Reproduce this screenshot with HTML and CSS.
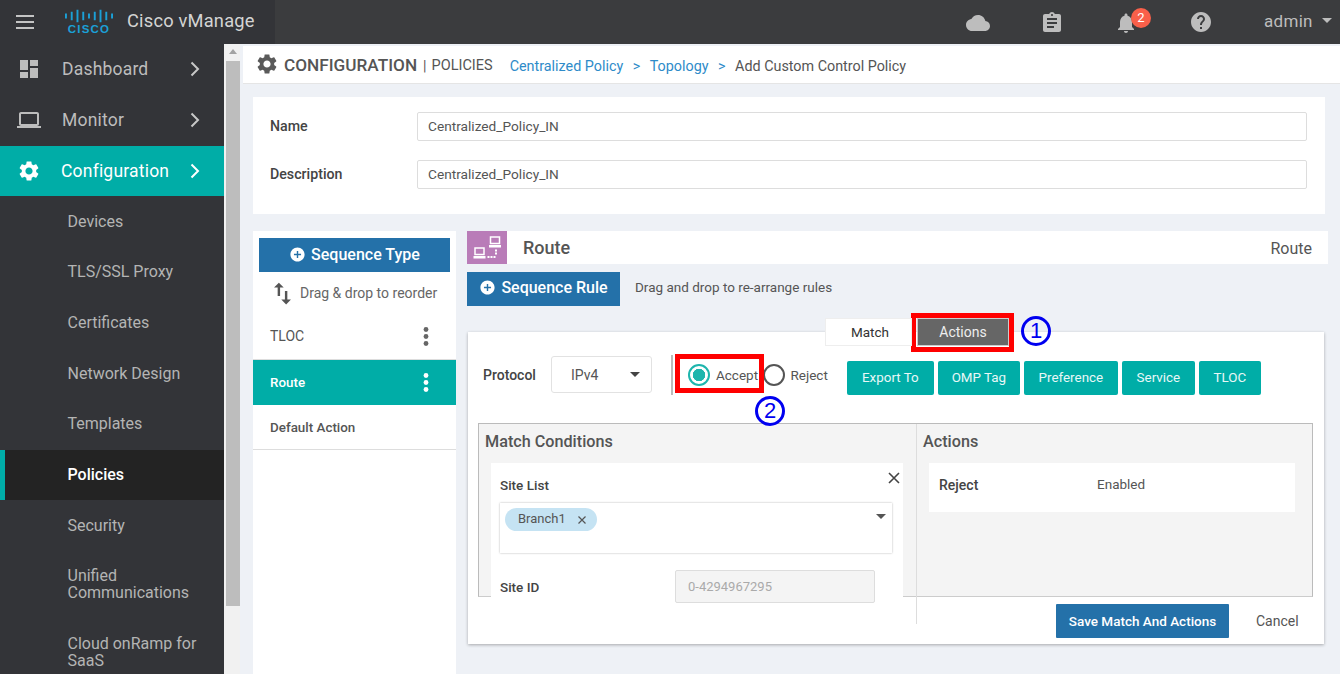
FILE: index.html
```html
<!DOCTYPE html>
<html lang="en">
<head>
<meta charset="utf-8">
<title>Cisco vManage</title>
<link rel="stylesheet" href="styles.css">
</head>
<body>
<header class="topbar">
  <div class="brand">
    <svg class="burger" viewBox="0 0 18 14"><rect y="0" width="18" height="2"/><rect y="6" width="18" height="2"/><rect y="12" width="18" height="2"/></svg>
    <div class="logo">
      <svg class="logo-bars" viewBox="0 0 50 14"><path fill="none" stroke="#1ba0d7" stroke-width="2" d="M1 4.500v5M7 2.500v9M13 .5v13M19 2.500v9M25 4.500v5M31 2.500v9M37 .5v13M43 2.500v9M49 4.500v5"/></svg>
      <span class="logo-word">CISCO</span>
    </div>
    <span class="product">Cisco vManage</span>
  </div>
  <div class="top-actions">
    <svg class="top-icon cloud" viewBox="0 0 24 24"><path d="M19.35 10.04C18.67 6.59 15.64 4 12 4 9.11 4 6.6 5.64 5.35 8.04 2.34 8.36 0 10.91 0 14c0 3.31 2.69 6 6 6h13c2.76 0 5-2.24 5-5 0-2.64-2.05-4.78-4.65-4.96z"/></svg>
    <svg class="top-icon clip" viewBox="0 0 24 24"><path d="M19 3h-4.18C14.4 1.84 13.3 1 12 1c-1.3 0-2.4.84-2.82 2H5c-1.1 0-2 .9-2 2v14c0 1.1.9 2 2 2h14c1.1 0 2-.9 2-2V5c0-1.1-.9-2-2-2zm-7 0c.55 0 1 .45 1 1s-.45 1-1 1-1-.45-1-1 .45-1 1-1zm2 14H7v-2h7v2zm3-4H7v-2h10v2zm0-4H7V7h10v2z"/></svg>
    <div class="bell">
      <svg class="top-icon" viewBox="0 0 24 24"><path d="M12 22c1.1 0 2-.9 2-2h-4c0 1.1.89 2 2 2zm6-6v-5c0-3.07-1.64-5.64-4.5-6.32V4c0-.83-.67-1.5-1.5-1.5s-1.5.67-1.5 1.5v.68C7.63 5.36 6 7.92 6 11v5l-2 2v1h16v-1l-2-2z"/></svg>
      <span class="badge">2</span>
    </div>
    <svg class="top-icon help" viewBox="0 0 24 24"><path d="M12 2C6.48 2 2 6.48 2 12s4.48 10 10 10 10-4.48 10-10S17.52 2 12 2zm1 17h-2v-2h2v2zm2.07-7.75l-.9.92C13.45 12.9 13 13.5 13 15h-2v-.5c0-1.1.45-2.1 1.17-2.83l1.24-1.26c.37-.36.59-.86.59-1.41 0-1.1-.9-2-2-2s-2 .9-2 2H8c0-2.21 1.79-4 4-4s4 1.79 4 4c0 .88-.36 1.68-.93 2.25z"/></svg>
    <span class="user">admin</span>
    <span class="caret user-caret"></span>
  </div>
</header>

<div class="shell">
  <nav class="sidebar">
    <a class="nav-item"><svg class="nav-icon" viewBox="0 0 24 24"><path d="M3 13h8V3H3v10zm0 8h8v-6H3v6zm10 0h8V11h-8v10zm0-18v6h8V3h-8z"/></svg><span class="nav-label">Dashboard</span><svg class="chev" viewBox="0 0 10 16"><path d="M1.5 1.5 8 8l-6.500 6.500"/></svg></a>
    <a class="nav-item"><svg class="nav-icon" viewBox="0 0 24 24"><path d="M20 18c1.100 0 1.990-.9 1.990-2L22 6c0-1.100-.9-2-2-2H4c-1.100 0-2 .9-2 2v10c0 1.100.9 2 2 2H0v2h24v-2h-4zM4 6h16v10H4V6z"/></svg><span class="nav-label">Monitor</span><svg class="chev" viewBox="0 0 10 16"><path d="M1.500 1.500 8 8l-6.500 6.500"/></svg></a>
    <a class="nav-item nav-open"><svg class="nav-icon" viewBox="0 0 24 24"><path d="M19.140 12.940c.04-.3.06-.61.06-.94 0-.32-.02-.64-.07-.94l2.030-1.580c.18-.14.23-.41.12-.61l-1.920-3.320c-.12-.22-.37-.29-.59-.22l-2.390.96c-.5-.38-1.030-.7-1.620-.94l-.36-2.540c-.04-.24-.24-.41-.48-.41h-3.840c-.24 0-.43.17-.47.41l-.36 2.540c-.59.24-1.130.57-1.620.94l-2.390-.96c-.22-.08-.47 0-.59.22L2.740 8.870c-.12.21-.08.47.12.61l2.030 1.580c-.05.3-.09.63-.09.94s.02.64.07.94l-2.030 1.580c-.18.14-.23.41-.12.61l1.920 3.320c.12.22.37.29.59.22l2.390-.96c.5.38 1.030.7 1.620.94l.36 2.540c.05.24.24.41.48.41h3.840c.24 0 .44-.17.47-.41l.36-2.540c.59-.24 1.130-.56 1.620-.94l2.390.96c.22.08.47 0 .59-.22l1.920-3.320c.12-.22.07-.47-.12-.61l-2.010-1.580zM12 15.600c-1.980 0-3.600-1.620-3.600-3.600s1.620-3.600 3.600-3.600 3.600 1.620 3.600 3.600-1.620 3.600-3.600 3.600z"/></svg><span class="nav-label">Configuration</span><svg class="chev" viewBox="0 0 10 16"><path d="M1.500 1.500 8 8l-6.500 6.500"/></svg></a>
    <a class="sub-item">Devices</a>
    <a class="sub-item">TLS/SSL Proxy</a>
    <a class="sub-item">Certificates</a>
    <a class="sub-item">Network Design</a>
    <a class="sub-item">Templates</a>
    <a class="sub-item sub-active">Policies</a>
    <a class="sub-item">Security</a>
    <a class="sub-item sub-tall">Unified<br>Communications</a>
    <a class="sub-item sub-tall">Cloud onRamp for<br>SaaS</a>
  </nav>

  <div class="scrollbar">
    <span class="scroll-up"></span>
    <span class="scroll-thumb"></span>
  </div>

  <main class="main">
    <div class="page-head">
      <svg class="head-gear" viewBox="0 0 24 24"><path d="M19.140 12.940c.04-.3.06-.61.06-.94 0-.32-.02-.64-.07-.94l2.030-1.580c.18-.14.23-.41.12-.61l-1.920-3.320c-.12-.22-.37-.29-.59-.22l-2.390.96c-.5-.38-1.030-.7-1.620-.94l-.36-2.540c-.04-.24-.24-.41-.48-.41h-3.840c-.24 0-.43.17-.47.41l-.36 2.540c-.59.24-1.130.57-1.620.94l-2.390-.96c-.22-.08-.47 0-.59.22L2.740 8.870c-.12.21-.08.47.12.61l2.030 1.580c-.05.3-.09.63-.09.94s.02.64.07.94l-2.030 1.580c-.18.14-.23.41-.12.61l1.920 3.320c.12.22.37.29.59.22l2.390-.96c.5.38 1.030.7 1.620.94l.36 2.540c.05.24.24.41.48.41h3.840c.24 0 .44-.17.47-.41l.36-2.540c.59-.24 1.130-.56 1.620-.94l2.390.96c.22.08.47 0 .59-.22l1.920-3.320c.12-.22.07-.47-.12-.61l-2.010-1.580zM12 15.600c-1.980 0-3.600-1.620-3.600-3.600s1.620-3.600 3.600-3.600 3.600 1.620 3.600 3.600-1.620 3.600-3.600 3.600z"/></svg>
      <span class="head-title">CONFIGURATION</span>
      <span class="head-sep">|</span>
      <span class="head-sub">POLICIES</span>
      <span class="crumbs">
        <a class="crumb">Centralized Policy</a><span class="crumb-sep">&gt;</span>
        <a class="crumb">Topology</a><span class="crumb-sep">&gt;</span>
        <span class="crumb-now">Add Custom Control Policy</span>
      </span>
    </div>

    <section class="form-card">
      <div class="form-row"><label class="form-label">Name</label><div class="text-input">Centralized_Policy_IN</div></div>
      <div class="form-row"><label class="form-label">Description</label><div class="text-input">Centralized_Policy_IN</div></div>
    </section>

    <div class="workspace">
      <aside class="seq-panel">
        <button class="btn-blue seq-type"><svg class="plus" viewBox="0 0 24 24"><path d="M12 2C6.480 2 2 6.480 2 12s4.480 10 10 10 10-4.480 10-10S17.520 2 12 2zm5 11h-4v4h-2v-4H7v-2h4V7h2v4h4v2z"/></svg>Sequence Type</button>
        <div class="reorder"><svg class="swap" viewBox="0 0 24 24"><path d="M16 17.010V10h-2v7.010h-3L15 21l4-3.990h-3zM9 3L5 6.990h3V14h2V6.990h3L9 3z"/></svg>Drag &amp; drop to reorder</div>
        <div class="seq-item seq-first"><span>TLOC</span><svg class="dots" viewBox="0 0 6 19"><circle cx="3" cy="2.500" r="2.400"/><circle cx="3" cy="9.500" r="2.400"/><circle cx="3" cy="16.500" r="2.400"/></svg></div>
        <div class="seq-item seq-active"><span>Route</span><svg class="dots" viewBox="0 0 6 19"><circle cx="3" cy="2.500" r="2.400"/><circle cx="3" cy="9.500" r="2.400"/><circle cx="3" cy="16.500" r="2.400"/></svg></div>
        <div class="seq-item seq-last"><span>Default Action</span></div>
      </aside>

      <div class="editor">
        <div class="route-head">
          <span class="route-icon">
            <svg viewBox="0 0 40 33"><g fill="none" stroke="#fff" stroke-width="1.500"><rect x="8" y="17" width="9" height="6.500"/><rect x="23.500" y="6" width="9" height="6.500"/></g><g fill="#fff"><rect x="6.500" y="25" width="12" height="2.500"/><rect x="22" y="14" width="12" height="2.500"/><rect x="20.500" y="25" width="2" height="2"/><rect x="23.500" y="25" width="2" height="2"/><rect x="26.500" y="25" width="2" height="2"/><rect x="28" y="18.500" width="2" height="2"/><rect x="28" y="21.500" width="2" height="2"/></g></svg>
          </span>
          <span class="route-title">Route</span>
          <span class="route-type">Route</span>
        </div>
        <div class="rule-bar">
          <button class="btn-blue seq-rule"><svg class="plus" viewBox="0 0 24 24"><path d="M12 2C6.480 2 2 6.480 2 12s4.480 10 10 10 10-4.480 10-10S17.520 2 12 2zm5 11h-4v4h-2v-4H7v-2h4V7h2v4h4v2z"/></svg>Sequence Rule</button>
          <span class="rule-hint">Drag and drop to re-arrange rules</span>
        </div>

        <div class="tabs">
          <span class="tab tab-match">Match</span>
          <span class="tab tab-on">Actions</span>
        </div>

        <section class="rule-card">
          <div class="action-row">
            <span class="proto-label">Protocol</span>
            <div class="select"><span>IPv4</span><span class="caret select-caret"></span></div>
            <span class="vsep"></span>
            <span class="radio radio-on"></span><span class="radio-text accept">Accept</span>
            <span class="radio"></span><span class="radio-text">Reject</span>
            <div class="act-btns">
              <button class="btn-teal">Export To</button>
              <button class="btn-teal">OMP Tag</button>
              <button class="btn-teal">Preference</button>
              <button class="btn-teal">Service</button>
              <button class="btn-teal">TLOC</button>
            </div>
          </div>

          <div class="rules">
            <div class="col-match">
              <h3 class="col-title">Match Conditions</h3>
              <div class="match-card">
                <svg class="close" viewBox="0 0 12 12"><path d="M1 1l10 10M11 1 1 11"/></svg>
                <div class="field-label">Site List</div>
                <div class="multi">
                  <span class="chip">Branch1<svg class="chip-x" viewBox="0 0 10 10"><path d="M1.500 1.500l7 7M8.500 1.500l-7 7"/></svg></span>
                  <span class="caret multi-caret"></span>
                </div>
                <div class="site-id">
                  <span class="field-label">Site ID</span>
                  <div class="site-input">0-4294967295</div>
                </div>
              </div>
            </div>
            <div class="col-actions">
              <h3 class="col-title">Actions</h3>
              <div class="action-card">
                <span class="field-label reject-label">Reject</span>
                <span class="action-value">Enabled</span>
              </div>
            </div>
          </div>

          <div class="card-foot">
            <button class="btn-blue save">Save Match And Actions</button>
            <span class="cancel">Cancel</span>
          </div>
        </section>
      </div>
    </div>
  </main>
</div>

<span class="mark mark-actions"></span>
<span class="mark mark-accept"></span>
<span class="step step-one">1</span>
<span class="step step-two">2</span>
</body>
</html>
```
FILE: styles.css
```css
* { box-sizing: border-box; }
html, body { margin: 0; padding: 0; }
body {
  position: relative;
  width: 1340px;
  height: 674px;
  overflow: hidden;
  background: #eef1f6;
  font-family: Roboto, "Liberation Sans", sans-serif;
  color: #4a4a4a;
}
button { font-family: inherit; border: 0; cursor: pointer; }
svg { display: block; flex: none; }

/* top bar */
.topbar { display: flex; height: 44px; background: #3b3c3e; }
.brand { display: flex; align-items: center; width: 275px; background: #333438; }
.burger { width: 18px; height: 14px; margin-left: 16px; margin-right: 29px; fill: #c4c4c4; }
.logo { width: 50px; display: flex; flex-direction: column; align-items: center; margin-left: 1px; }
.logo-bars { width: 48px; height: 14px; }
.logo-word { font: 700 11.500px/11px "Liberation Sans", sans-serif; letter-spacing: 1.200px; color: #1ba0d7; margin-top: 1px; }
.product { margin-left: 13px; font-size: 18.300px; color: #d4d4d4; letter-spacing: .2px; padding-bottom: 3px; }
.top-actions { flex: 1; display: flex; align-items: center; position: relative; padding-left: 691px; }
.top-icon { width: 24px; height: 24px; fill: #bdbdbd; }
.cloud { margin-right: 50px; margin-top: 2px; }
.clip { margin-right: 50px; margin-top: 1px; }
.bell { position: relative; width: 24px; margin-right: 51px; margin-top: 1px; }
.badge {
  position: absolute; left: 17px; top: -3px; width: 20px; height: 20px;
  border-radius: 50%; background: #f9604a; color: #fff; font-size: 13px; line-height: 19px; text-align: center;
}
.user { margin-left: 51px; font-size: 17px; color: #bdbdbd; letter-spacing: .3px; padding-bottom: 3px; }
.caret { display: block; width: 0; height: 0; border-left: 5px solid transparent; border-right: 5px solid transparent; border-top: 5px solid #bdbdbd; }
.user-caret { margin-left: 9px; margin-bottom: 3px; }

/* shell */
.shell { display: flex; height: 630px; }

.sidebar { width: 224px; flex: none; background: #333438; overflow: hidden; }
.nav-item { display: flex; align-items: center; height: 51px; padding-bottom: 2px; color: #bdbdbd; font-size: 17.500px; }
.nav-icon { width: 24px; height: 24px; margin-left: 17px; margin-right: 21px; fill: #bdbdbd; }
.nav-label { flex: 1; letter-spacing: .2px; }
.chev { width: 10px; height: 16px; margin-right: 24px; fill: none; stroke: #c8c8c8; stroke-width: 2; }
.nav-open { background: #00ada7; color: #fff; height: 50px; padding-bottom: 0; }
.nav-open .nav-icon { fill: #fff; margin-right: 20px; }
.nav-open .chev { stroke: #fff; }
.sub-item { display: flex; align-items: center; height: 50.600px; padding-left: 67.500px; font-size: 16px; color: #b4b4b4; line-height: 17px; }
.sub-active { height: 50px; margin-top: 1px; background: #232323; color: #fff; font-weight: 500; box-shadow: inset 5px 0 0 #00ada7; }
.sub-tall { height: 68px; display: block; padding-top: 16px; }

.scrollbar { position: relative; width: 16px; flex: none; padding: 5px 0 0 2px; background: #f1f1f1; }
.scroll-up { display: block; width: 0; height: 0; margin: 0 auto 7px; border-left: 4px solid transparent; border-right: 4px solid transparent; border-bottom: 5px solid #a3a3a3; }
.scroll-thumb { display: block; height: 545px; background: #bdbdbd; margin-top: 0; }

.main { flex: 1; min-width: 0; padding-left: 3px; padding-top: 2px; }

.page-head { display: flex; align-items: center; height: 38px; background: #fff; border-bottom: 1px solid #e5e5e5; padding-left: 12px; }
.head-gear { width: 24px; height: 24px; fill: #5a5a5a; margin-right: 5px; margin-top: -2px; }
.head-title { font-size: 17.200px; font-weight: 500; color: #555; padding-top: 1px; }
.head-sep { margin-left: 6px; font-size: 14px; color: #555; padding-top: 2px; }
.head-sub { margin-left: 5px; font-size: 14.500px; color: #555; padding-top: 2px; }
.crumbs { margin-left: 17px; display: flex; align-items: center; font-size: 14.350px; padding-top: 4px; }
.crumb { color: #2e8bc9; }
.crumb-sep { color: #2e8bc9; margin: 0 9.500px; }
.crumb-now { color: #555; margin-left: 0; }

.form-card { margin: 13px 15px 0 10px; height: 117px; background: #fff; padding-top: 15px; }
.form-row { display: flex; align-items: center; height: 29px; margin-bottom: 19px; }
.form-label { width: 164px; padding-left: 17px; padding-bottom: 2px; font-size: 14.200px; font-weight: 500; color: #444; }
.text-input { width: 890px; height: 29px; line-height: 27px; border: 1px solid #ddd; border-radius: 2px; padding-left: 10px; font-size: 13.700px; color: #555; }

.workspace { display: flex; margin: 17px 0 0 10px; }

.seq-panel { width: 203px; height: 450px; background: #fff; padding-top: 7px; flex: none; }
.btn-blue { background: #2471a9; color: #fff; }
.seq-type { display: flex; align-items: center; justify-content: center; width: 191px; height: 34px; margin-left: 6px; padding-bottom: 2px; font-size: 16px; font-weight: 500; }
.plus { width: 17px; height: 17px; fill: #fff; margin-right: 5px; }
.reorder { display: flex; align-items: center; height: 43px; padding-left: 15px; padding-bottom: 1px; font-size: 14px; color: #666; }
.swap { width: 29px; height: 29px; fill: #555; margin-right: 3px; }
.seq-item { display: flex; align-items: center; justify-content: space-between; padding: 0 27px 0 17px; font-size: 13.400px; color: #555; border-bottom: 1px solid #ddd; font-weight: 500; }
.seq-first { height: 45px; font-size: 14px; font-weight: 400; padding-bottom: 2px; }
.seq-active { height: 45px; background: #00ada7; color: #fff; border-bottom: 0; }
.seq-last { height: 45px; }
.dots { width: 6px; height: 19px; fill: #666; }
.seq-active .dots { fill: #fff; }

.editor { width: 861px; margin-left: 11px; flex: none; }
.route-head { display: flex; align-items: center; height: 33px; background: #fff; }
.route-icon { width: 40px; height: 33px; background: #b97cb8; flex: none; }
.route-title { margin-left: 16px; font-size: 18px; font-weight: 500; color: #555; }
.route-type { margin-left: auto; margin-right: 16px; font-size: 16px; color: #555; padding-top: 1px; }
.rule-bar { display: flex; align-items: center; margin-top: 8px; }
.seq-rule { display: flex; align-items: center; justify-content: center; width: 153px; height: 34px; padding-bottom: 4px; font-size: 16px; font-weight: 500; }
.rule-hint { margin-left: 15px; font-size: 13.500px; color: #555; padding-bottom: 4px; }

.tabs { position: relative; z-index: 1; display: flex; gap: 5px; margin: 12px 0 -14px 358px; height: 28px; }
.tab { width: 87px; height: 28px; line-height: 27px; text-align: center; font-size: 14px; color: #333; background: #fff; border: 1px solid #eee; }
.tab-match { font-size: 13.500px; padding-left: 3px; }
.tab-on { width: 92px; background: #666; color: #eee; border-color: #ccc; }

.rule-card { margin-left: 1px; width: 856px; height: 312px; background: #fff; box-shadow: 0 1px 3px rgba(0,0,0,.3); padding: 24px 11px 0 10px; }
.action-row { display: flex; align-items: center; height: 37px; padding-left: 5px; margin-bottom: 30px; }
.proto-label { width: 68px; font-size: 14px; font-weight: 500; color: #444; }
.select { display: flex; align-items: center; justify-content: space-between; width: 101px; height: 37px; padding: 0 11px 0 19px; border: 1px solid #e2e2e2; border-radius: 3px; font-size: 14px; color: #555; }
.select-caret { border-top-color: #444; }
.vsep { width: 2px; height: 40px; background: #bbb; margin: 0 15px 0 19px; }
.radio { width: 22px; height: 22px; border-radius: 50%; border: 2px solid #555; flex: none; }
.radio-on { border-color: #1eb5ad; background: radial-gradient(circle, #1eb5ad 0 6px, transparent 6.500px); }
.radio-text { margin-left: 5.500px; font-size: 13.500px; color: #555; }
.accept { width: 47px; margin-left: 6px; }
.act-btns { display: flex; gap: 4px; margin-left: 19px; margin-top: 7px; }
.btn-teal { width: 87px; height: 34px; padding: 0 0 1px; background: #00ada7; color: #e8f8f7; font-size: 13.400px; border-radius: 2px; }
.btn-teal:nth-child(2) { width: 82px; }
.btn-teal:nth-child(3) { width: 94px; }
.btn-teal:nth-child(4) { width: 73px; }
.btn-teal:nth-child(5) { width: 62px; }

.rules { display: flex; width: 835px; height: 174px; background: #f4f4f4; border: 1px solid #bbb; border-bottom-color: #ccc; }
.col-match { position: relative; width: 438px; height: 200px; overflow: hidden; border-right: 1px solid #ddd; flex: none; }
.col-title { margin: 0; padding: 8px 0 0 6px; font-size: 16.200px; line-height: 20px; font-weight: 500; color: #555; }
.match-card { position: relative; width: 412px; height: 170px; margin: 11px 0 0 12px; background: #fff; padding: 13px 10px 0 9px; }
.close { position: absolute; right: 3px; top: 9px; width: 12px; height: 12px; fill: none; stroke: #444; stroke-width: 1.600; }
.field-label { font-size: 13.500px; font-weight: 500; color: #444; line-height: 18px; }
.multi { position: relative; width: 392px; height: 50px; margin-top: 9px; margin-left: 0; background: #fff; box-shadow: 0 0 2px rgba(0,0,0,.3); padding: 5px; }
.chip { display: flex; align-items: center; width: 92px; height: 23px; padding-bottom: 2px; border-radius: 12px; background: #c5e3f3; font-size: 13px; padding-left: 13px; color: #555; }
.chip-x { width: 10px; height: 10px; margin-left: 11px; margin-top: 2px; fill: none; stroke: #555; stroke-width: 1.200; }
.multi-caret { position: absolute; right: 6px; top: 11px; border-top-color: #555; }
.site-id { display: flex; align-items: center; margin-top: 17px; }
.site-id .field-label { width: 175px; }
.site-input { width: 200px; height: 33px; line-height: 31px; padding-left: 12px; font-size: 13px; color: #aaa; background: #f4f4f4; border: 1px solid #ddd; border-radius: 2px; }
.col-actions { flex: 1; }
.action-card { display: flex; height: 49px; margin: 11px 17px 0 12px; background: #fff; padding: 13px 0 0 10px; }
.reject-label { width: 158px; font-size: 14px; }
.action-value { font-size: 13.500px; color: #555; line-height: 16px; }

.card-foot { display: flex; align-items: center; margin-top: 7px; padding-left: 578px; }
.save { width: 173px; height: 34px; font-size: 13.500px; font-weight: 500; border-radius: 1px; padding-bottom: 1px; }
.cancel { margin-left: 27px; font-size: 14px; color: #555; }

/* annotations drawn over the screenshot */
.mark { position: absolute; border: 5px solid #f00; pointer-events: none; }
.mark-actions { left: 911px; top: 313px; width: 103px; height: 39px; }
.mark-accept { left: 675px; top: 354px; width: 89px; height: 39px; }
.step {
  position: absolute; width: 30px; height: 30px; border-radius: 50%; border: 3px solid #0000f0;
  color: #0000f0; font: 400 22px/24px "Liberation Sans", sans-serif; text-align: center;
}
.step-one { left: 1021px; top: 316px; }
.step-two { left: 755px; top: 396px; }
```
